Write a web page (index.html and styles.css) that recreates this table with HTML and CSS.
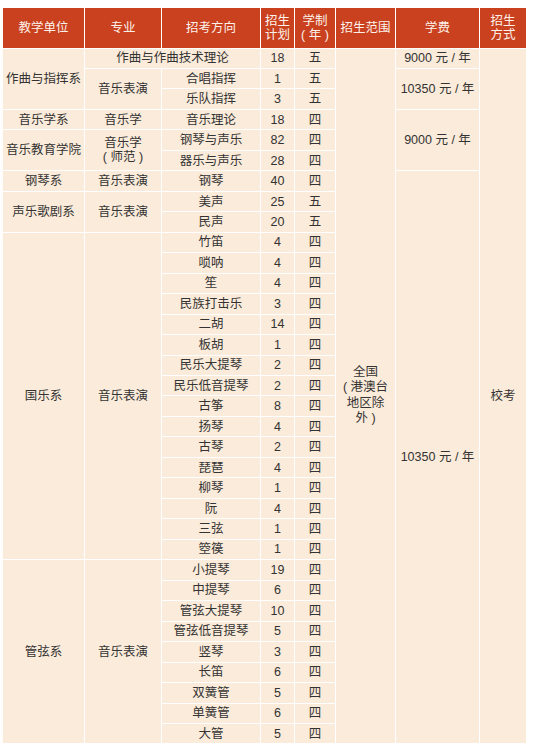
FILE: index.html
```html
<!DOCTYPE html>
<html lang="zh-CN">
<head>
<meta charset="utf-8">
<title>招生计划</title>
<link rel="stylesheet" href="styles.css">
</head>
<body>
<table class="plan">
  <colgroup>
    <col class="c-unit"><col class="c-major"><col class="c-dir"><col class="c-num"><col class="c-years"><col class="c-range"><col class="c-fee"><col class="c-way">
  </colgroup>
  <thead>
    <tr class="head">
      <th>教学单位</th>
      <th>专业</th>
      <th>招考方向</th>
      <th>招生<br>计划</th>
      <th>学制<br>( 年 )</th>
      <th>招生范围</th>
      <th>学费</th>
      <th>招生<br>方式</th>
    </tr>
  </thead>
  <tbody>
    <tr><td rowspan="3">作曲与指挥系</td><td colspan="2">作曲与作曲技术理论</td><td>18</td><td>五</td>
        <td rowspan="34" class="range">全国<br>( 港澳台<br>地区除<br>外 )</td>
        <td>9000 元 / 年</td>
        <td rowspan="34" class="last">校考</td></tr>
    <tr><td rowspan="2">音乐表演</td><td>合唱指挥</td><td>1</td><td>五</td><td rowspan="2">10350 元 / 年</td></tr>
    <tr><td>乐队指挥</td><td>3</td><td>五</td></tr>
    <tr><td>音乐学系</td><td>音乐学</td><td>音乐理论</td><td>18</td><td>四</td><td rowspan="3">9000 元 / 年</td></tr>
    <tr><td rowspan="2">音乐教育学院</td><td rowspan="2" class="ml">音乐学<br>( 师范 )</td><td>钢琴与声乐</td><td>82</td><td>四</td></tr>
    <tr><td>器乐与声乐</td><td>28</td><td>四</td></tr>
    <tr><td>钢琴系</td><td>音乐表演</td><td>钢琴</td><td>40</td><td>四</td><td rowspan="28">10350 元 / 年</td></tr>
    <tr><td rowspan="2">声乐歌剧系</td><td rowspan="2">音乐表演</td><td>美声</td><td>25</td><td>五</td></tr>
    <tr><td>民声</td><td>20</td><td>五</td></tr>
    <tr><td rowspan="16">国乐系</td><td rowspan="16">音乐表演</td><td>竹笛</td><td>4</td><td>四</td></tr>
    <tr><td>唢呐</td><td>4</td><td>四</td></tr>
    <tr><td>笙</td><td>4</td><td>四</td></tr>
    <tr><td>民族打击乐</td><td>3</td><td>四</td></tr>
    <tr><td>二胡</td><td>14</td><td>四</td></tr>
    <tr><td>板胡</td><td>1</td><td>四</td></tr>
    <tr><td>民乐大提琴</td><td>2</td><td>四</td></tr>
    <tr><td>民乐低音提琴</td><td>2</td><td>四</td></tr>
    <tr><td>古筝</td><td>8</td><td>四</td></tr>
    <tr><td>扬琴</td><td>4</td><td>四</td></tr>
    <tr><td>古琴</td><td>2</td><td>四</td></tr>
    <tr><td>琵琶</td><td>4</td><td>四</td></tr>
    <tr><td>柳琴</td><td>1</td><td>四</td></tr>
    <tr><td>阮</td><td>4</td><td>四</td></tr>
    <tr><td>三弦</td><td>1</td><td>四</td></tr>
    <tr><td>箜篌</td><td>1</td><td>四</td></tr>
    <tr><td rowspan="9">管弦系</td><td rowspan="9">音乐表演</td><td>小提琴</td><td>19</td><td>四</td></tr>
    <tr><td>中提琴</td><td>6</td><td>四</td></tr>
    <tr><td>管弦大提琴</td><td>10</td><td>四</td></tr>
    <tr><td>管弦低音提琴</td><td>5</td><td>四</td></tr>
    <tr><td>竖琴</td><td>3</td><td>四</td></tr>
    <tr><td>长笛</td><td>6</td><td>四</td></tr>
    <tr><td>双簧管</td><td>5</td><td>四</td></tr>
    <tr><td>单簧管</td><td>6</td><td>四</td></tr>
    <tr><td>大管</td><td>5</td><td>四</td></tr>
  </tbody>
</table>
</body>
</html>
```

FILE: styles.css
```css
html, body {
  margin: 0;
  padding: 0;
  background: #ffffff;
}

.plan {
  margin: 8px 0 0 3px;
  width: 524px;
  table-layout: fixed;
  border-collapse: separate;
  border-spacing: 0;
  font-family: "Liberation Sans", "Noto Sans CJK SC", sans-serif;
  font-size: 12.5px;
  line-height: 14px;
  color: #333333;
}

.c-unit { width: 82px; }
.c-major { width: 77px; }
.c-dir { width: 99px; }
.c-num { width: 34px; }
.c-years { width: 41px; }
.c-range { width: 60px; }
.c-fee { width: 84px; }
.c-way { width: 47px; }

.plan th,
.plan td {
  box-sizing: border-box;
  padding: 0;
  text-align: center;
  vertical-align: middle;
  border-right: 1.5px solid #ffffff;
  border-bottom: 1.5px solid #ffffff;
  white-space: nowrap;
}

.plan th {
  background: #c9411f;
  color: #fdf1ea;
  font-weight: normal;
  height: 40.5px;
}

.plan td {
  background: #fbebda;
  height: 20.47px;
}

.plan .range {
  line-height: 15.5px;
}
```
